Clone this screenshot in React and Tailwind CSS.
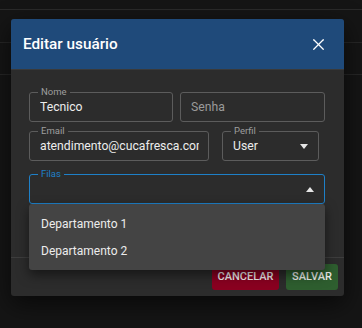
import { X } from 'lucide-react';

const font = { fontFamily: 'Roboto, "Liberation Sans", sans-serif' };

function Field({ label, value, placeholder, focused, className = '', adornment }) {
  return (
    <div
      className={`relative flex h-[30px] items-center rounded-[3px] border px-[10px] ${
        focused ? 'border-[#1e80c8]' : 'border-[#5c5c5c]'
      } ${className}`}
    >
      {label && (
        <span
          className={`absolute -top-[7px] left-[8px] bg-[#2c2c2c] px-[3px] text-[9.5px] leading-[12px] ${
            focused ? 'text-[#1e80c8]' : 'text-[#9e9e9e]'
          }`}
        >
          {label}
        </span>
      )}
      <span
        className={`flex-1 overflow-hidden whitespace-nowrap text-[12.2px] ${
          value ? 'text-[#ececec]' : 'text-[#9a9a9a]'
        }`}
      >
        {value || placeholder}
      </span>
      {adornment}
    </div>
  );
}

function Caret({ up }) {
  return (
    <svg width="8" height="5" viewBox="0 0 8 5" className="shrink-0">
      <path d={up ? 'M0 5 L4 0 L8 5 Z' : 'M0 0 L4 5 L8 0 Z'} fill="#e6e6e6" />
    </svg>
  );
}

export default function App() {
  return (
    <div className="relative h-[328px] w-[362px] overflow-hidden bg-[#151515]" style={font}>
      {/* table behind the backdrop */}
      <div className="h-[10px] border-b border-[#2a2a2a]" />
      <div className="h-[33px] border-b border-[#262626]" />
      <div className="h-[32px] border-b border-[#262626]" />

      {/* dialog */}
      <div className="absolute left-[11px] top-[19px] w-[333px] rounded-[3px] bg-[#2c2c2c] shadow-[0_8px_24px_rgba(0,0,0,0.6)]">
        <div className="flex h-[51px] items-center justify-between rounded-t-[3px] border-b border-[#3a3a3a] bg-[#1f4a7a] pl-[12px] pr-[16px]">
          <span className="text-[15.3px] font-medium text-white">Editar usuário</span>
          <X size={19} strokeWidth={1.6} className="text-white" />
        </div>

        <div className="flex h-[187px] flex-col px-[18px] pt-[22px]">
          <div className="flex gap-[7px]">
            <Field label="Nome" value="Tecnico" className="w-[144px]" />
            <Field placeholder="Senha" className="w-[145px]" />
          </div>
          <div className="mt-[9px] flex gap-[13px]">
            <Field label="Email" value="atendimento@cucafresca.com" className="w-[180px] pr-[9px]" />
            <Field
              label="Perfil"
              value="User"
              className="w-[97px] pr-[10px]"
              adornment={<Caret />}
            />
          </div>
          <div className="relative mt-[13px]">
            <Field label="Filas" focused className="w-[296px] pr-[10px]" adornment={<Caret up />} />
            <div className="absolute left-0 top-[30px] z-10 w-[296px] rounded-[3px] bg-[#444444] py-[6px] shadow-[0_5px_12px_rgba(0,0,0,0.5)]">
              <div className="flex h-[27px] items-center px-[12px] text-[12px] text-[#ececec]">Departamento 1</div>
              <div className="flex h-[27px] items-center px-[12px] text-[12px] text-[#ececec]">Departamento 2</div>
            </div>
          </div>
        </div>

        <div className="flex justify-end gap-[7px] border-t border-[#3d3d3d] px-[6px] pb-[6px] pt-[6px]">
          <button className="h-[26px] w-[67px] rounded-[3px] bg-[#8a0020] text-[11px] font-medium text-[#f0f0f0]">
            CANCELAR
          </button>
          <button className="h-[26px] w-[52px] rounded-[3px] bg-[#2e5e2f] text-[11px] font-medium text-[#f0f0f0]">
            SALVAR
          </button>
        </div>
      </div>
    </div>
  );
}
